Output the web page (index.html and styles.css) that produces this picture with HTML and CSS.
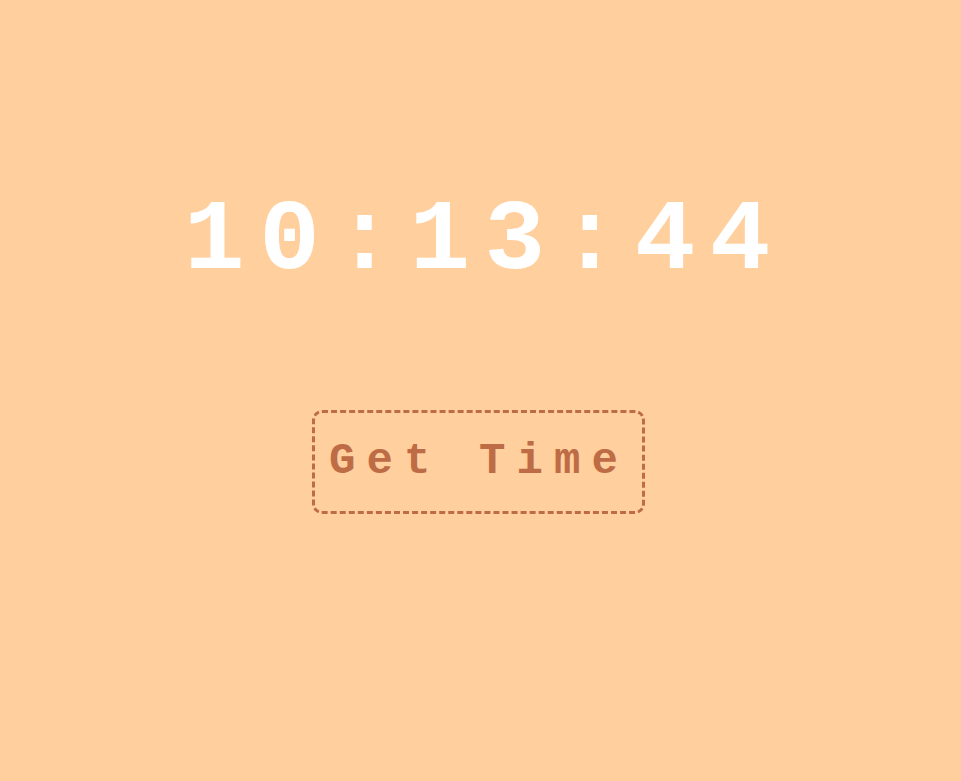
FILE: index.html
```html
<!DOCTYPE html>
<html>
<head>
<meta charset="utf-8">
<link rel="stylesheet" href="styles.css">
</head>
<body>
<main class="app">
  <div class="clock">10:13:44</div>
  <button class="get-time">Get Time</button>
</main>
</body>
</html>
```
FILE: styles.css
```css
html, body {
  margin: 0;
  padding: 0;
  height: 100%;
}
body {
  background: #ffcf9d;
  font-family: "Liberation Mono", "Courier New", monospace;
}
.app {
  display: flex;
  flex-direction: column;
  align-items: center;
  padding-top: 161px;
}
.clock {
  color: #ffffff;
  font-weight: bold;
  font-size: 101px;
  letter-spacing: 14.5px;
  line-height: 160px;
  padding-left: 8px;
}
.get-time {
  margin-top: 89px;
  margin-right: 4px;
  font-family: "Liberation Mono", "Courier New", monospace;
  font-weight: bold;
  font-size: 44px;
  letter-spacing: 11.1px;
  line-height: 58px;
  color: #be6c46;
  background: transparent;
  border: 3px dashed #be6c46;
  border-radius: 10px;
  padding: 19px 13px 21px 14px;
}
```
